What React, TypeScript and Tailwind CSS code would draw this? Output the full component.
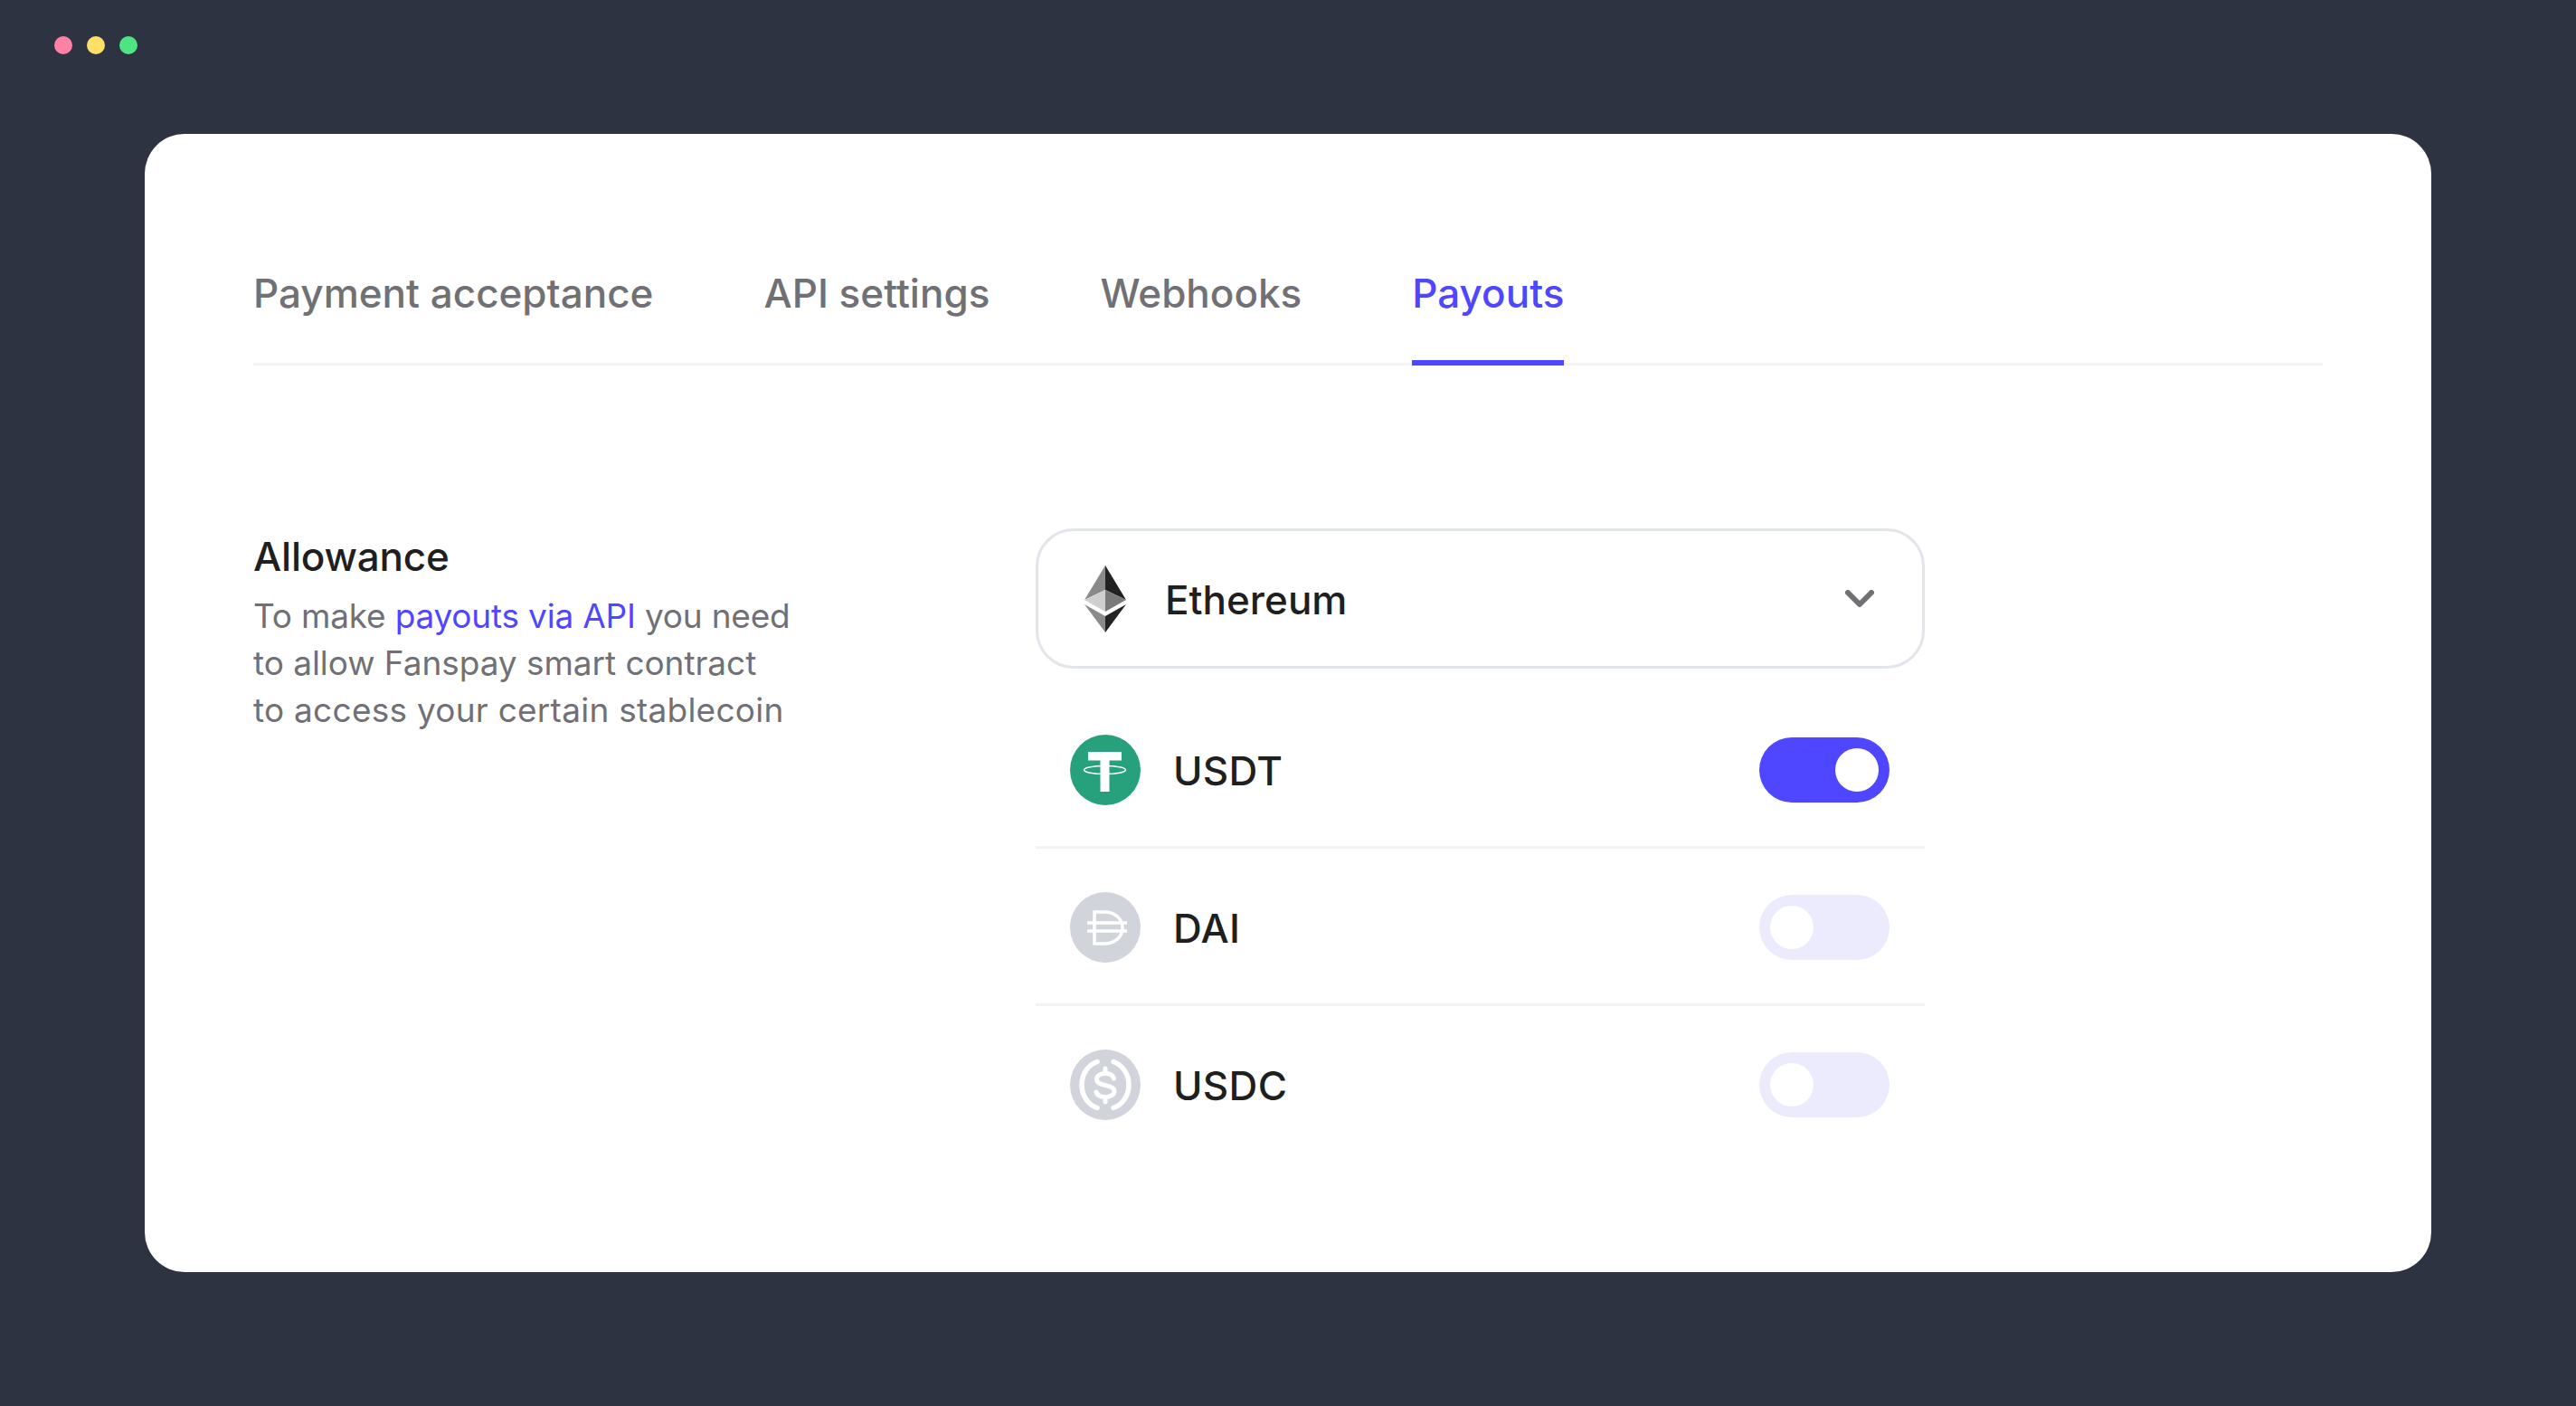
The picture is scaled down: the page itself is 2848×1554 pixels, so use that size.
const tabs = ["Payment acceptance", "API settings", "Webhooks", "Payouts"];

const EthIcon = () => (
  <svg width="46" height="74" viewBox="0 0 46 74" aria-hidden="true">
    <path d="M23 0 0 38l23-11z" fill="#8a8a8a" />
    <path d="M23 0v27l23 11z" fill="#222222" />
    <path d="M0 38l23-11v24z" fill="#cfcfcf" />
    <path d="M23 27l23 11-23 13z" fill="#7a7a7a" />
    <path d="M0 43l23 13v18z" fill="#8a8a8a" />
    <path d="M46 43 23 56v18z" fill="#222222" />
  </svg>
);

const UsdtIcon = () => (
  <svg width="78" height="78" viewBox="0 0 78 78" aria-hidden="true">
    <circle cx="39" cy="39" r="39" fill="#26a17b" />
    <path d="M20 19h37v9.500H43.500V63h-10V28.500H20z" fill="#fff" />
    <ellipse cx="38.500" cy="39" rx="23" ry="4.500" fill="none" stroke="#fff" strokeWidth="1.500" />
  </svg>
);

const DaiIcon = () => (
  <svg width="78" height="78" viewBox="0 0 78 78" aria-hidden="true">
    <circle cx="39" cy="39" r="39" fill="#d1d5db" />
    <path d="M27 22h11c11 0 20 7 20 17.500S49 57 38 57H27z" fill="none" stroke="#fff" strokeWidth="3.500" />
    <path d="M19 34h44M19 43h44" fill="none" stroke="#fff" strokeWidth="3.500" />
  </svg>
);

const UsdcIcon = () => (
  <svg width="78" height="78" viewBox="0 0 78 78" aria-hidden="true">
    <circle cx="39" cy="39" r="39" fill="#d1d5db" />
    <path d="M30 13.500C20 17 13 27 13 39s7 22 17 25.500" fill="none" stroke="#fff" strokeWidth="5.500" strokeLinecap="round" />
    <path d="M48 13.500C58 17 65 27 65 39s-7 22-17 25.500" fill="none" stroke="#fff" strokeWidth="5.500" strokeLinecap="round" />
    <path d="M48.500 32c-1-3.500-4.500-5.500-9.500-5.500-5.500 0-9.500 2.500-9.500 6.500s4 5.500 9.500 6.500 10 2.500 10 6.500-4.500 6.500-10 6.500c-5.500 0-9-2-10-5.500" fill="none" stroke="#fff" strokeWidth="5" strokeLinecap="round" />
    <path d="M39 21v5.500M39 52.500V58" fill="none" stroke="#fff" strokeWidth="5" strokeLinecap="round" />
  </svg>
);

const Toggle = ({ on }: { on?: boolean }) => (
  <div className={`flex h-[72px] w-[144px] items-center rounded-full p-3 ${on ? "justify-end bg-[#4f46ff]" : "justify-start bg-[#ecebfd]"}`}>
    <div className="size-12 rounded-full bg-white" />
  </div>
);

const coins = [
  { name: "USDT", icon: <UsdtIcon />, on: true },
  { name: "DAI", icon: <DaiIcon />, on: false },
  { name: "USDC", icon: <UsdcIcon />, on: false },
];

export default function App() {
  return (
    <div className="h-[1554px] w-[2848px] overflow-hidden bg-[#2d3340] font-['Inter',sans-serif]">
      <div className="flex gap-4 pl-[60px] pt-10">
        <span className="size-5 rounded-full bg-[#ff82a5]" />
        <span className="size-5 rounded-full bg-[#ffe066]" />
        <span className="size-5 rounded-full bg-[#4fe384]" />
      </div>

      <div className="ml-40 mt-[88px] h-[1258px] w-[2528px] rounded-[44px] bg-white px-[120px]">
        <div className="flex h-[256px] items-end gap-[122px] border-b-[3px] border-[#f3f3f4]">
          {tabs.map((tab) => (
            <div
              key={tab}
              className={`-mb-[3px] h-[106px] border-b-[6px] text-[44px] font-medium leading-[52px] ${
                tab === "Payouts" ? "border-[#4f46ff] text-[#4f46ff]" : "border-transparent text-[#707075]"
              }`}
            >
              {tab}
            </div>
          ))}
        </div>

        <div className="mt-[180px] flex">
          <div className="w-[865px] pt-[5px]">
            <h2 className="text-[44px] font-medium leading-[52px] tracking-[-0.2px] text-[#1f1f1f]">Allowance</h2>
            <p className="mt-[14px] text-[37px] leading-[52px] text-[#707075]">
              <span className="block tracking-[-0.2px]">
                To make <span className="text-[#4f46ff]">payouts via API</span> you need
              </span>
              <span className="block tracking-[-0.05px]">to allow Fanspay smart contract</span>
              <span className="block tracking-[0.25px]">to access your certain stablecoin</span>
            </p>
          </div>

          <div className="w-[983px]">
            <div className="flex h-[155px] items-center rounded-[42px] border-[3px] border-[#e2e5ea] pl-[51px] pr-[53px]">
              <EthIcon />
              <span className="ml-[43px] pt-[2px] text-[44px] font-medium text-[#1f1f1f]">Ethereum</span>
              <svg className="ml-auto" width="32" height="20" viewBox="0 0 32 20" fill="none" aria-hidden="true">
                <path d="M3 3l13 13L29 3" stroke="#707075" strokeWidth="6" strokeLinecap="round" strokeLinejoin="round" />
              </svg>
            </div>

            <div className="mt-[25px]">
              {coins.map((coin, i) => (
                <div
                  key={coin.name}
                  className={`flex items-center pl-[38px] pr-[39px] pt-12 pb-[45px] ${i < coins.length - 1 ? "border-b-[3px] border-[#f3f3f4]" : ""}`}
                >
                  {coin.icon}
                  <span className="ml-[36px] pt-[1px] text-[44px] font-medium leading-[76px] tracking-[0.3px] text-[#1f1f1f]">{coin.name}</span>
                  <div className="ml-auto">
                    <Toggle on={coin.on} />
                  </div>
                </div>
              ))}
            </div>
          </div>
        </div>
      </div>
    </div>
  );
}
